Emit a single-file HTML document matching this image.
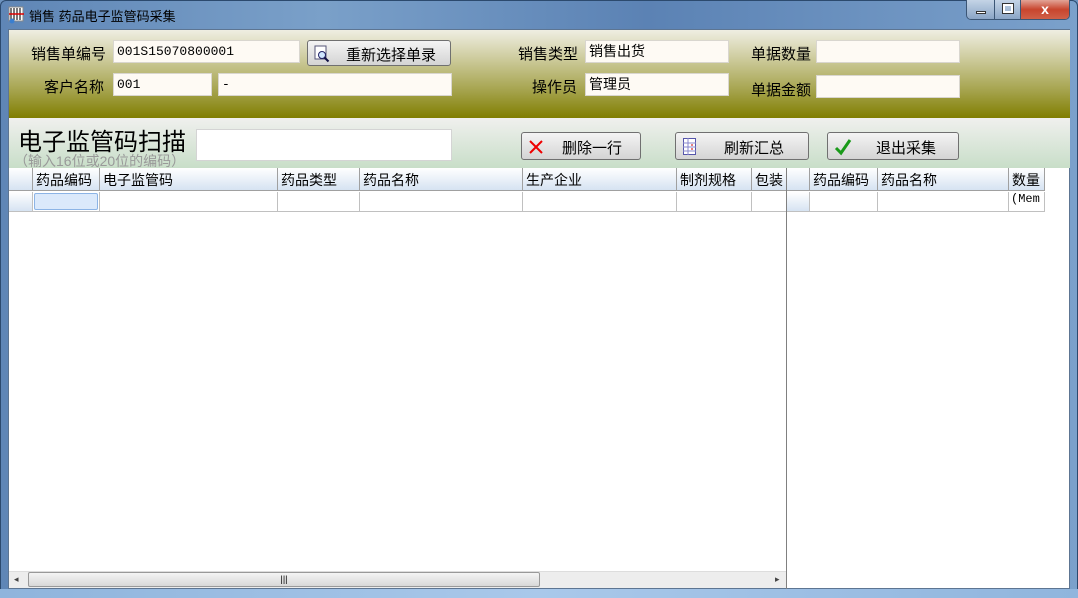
<!DOCTYPE html>
<html><head><meta charset="utf-8"><style>
*{margin:0;padding:0;box-sizing:border-box}
body{width:1078px;height:598px;overflow:hidden;position:relative;font-family:"Liberation Sans","Noto Sans CJK SC","WenQuanYi Zen Hei",sans-serif;font-size:14px;color:#000;background:#6d93bf}
.abs{position:absolute}
#frame{left:0;top:0;width:1078px;height:598px;background:linear-gradient(90deg,#5f86b6,#7aa0c9 30%,#5b82b4 60%,#7ba1cb);border:1px solid #2c4a6e;border-radius:6px 6px 0 0}
#bottom{left:0;top:589px;width:1078px;height:9px;background:linear-gradient(90deg,#8fb4dc,#a9c8ea 50%,#90b5dd)}
#title{left:29px;top:6px;font-size:13px;color:#000}
#client{left:8px;top:29px;width:1062px;height:560px;background:#fff;border:1px solid #5d7592}
#top{left:9px;top:30px;width:1061px;height:88px;background:linear-gradient(180deg,#efeee2 0%,#d0cea2 30%,#a4a24a 70%,#807e00 100%)}
#scan{left:9px;top:118px;width:1061px;height:50px;background:linear-gradient(180deg,#f0f0ee,#c8dec8)}
.lbl{position:absolute;font-size:15px;text-align:right}
.inp{position:absolute;background:#fefaf4;border:1px solid #d9d6cf;height:23px;font-size:13px;padding:3px 3px;font-family:"Liberation Mono","Noto Sans CJK SC",monospace}
.btn{position:absolute;border:1px solid #707070;border-radius:3px;background:linear-gradient(180deg,#f4f4f4,#e4e4e4 50%,#d4d4d4);font-size:14px;height:28px}
.btn span{position:absolute;top:5px}
.hdr{position:absolute;top:168px;height:23px;background:linear-gradient(180deg,#fff,#d6e3f2);border-bottom:1px solid #a0a0a0;border-right:1px solid #a0a0a0;font-size:14px;padding:2px 3px;white-space:nowrap;overflow:hidden}
.cell{position:absolute;top:192px;height:20px;border-bottom:1px solid #c0c0c0;border-right:1px solid #c0c0c0}
</style></head><body>
<div id="frame" class="abs"></div>
<svg class="abs" style="left:8px;top:6px" width="18" height="18"><rect x="1" y="1" width="14" height="14" fill="#fff" stroke="#888"/><path d="M3 2v12M6 2v12M9 2v12M12 2v12" stroke="#333" stroke-width="1.3"/><path d="M1 8h15" stroke="#d00" stroke-width="1.5"/><circle cx="4" cy="15" r="2.5" fill="#3a7fd0"/></svg>
<div id="title" class="abs">销售 药品电子监管码采集</div>
<div class="abs" style="left:966px;top:0;width:104px;height:20px;border:1px solid #3b5675;border-top:none;border-radius:0 0 5px 5px;overflow:hidden;display:flex">
 <div style="width:28px;background:linear-gradient(#c4d4e6,#8aa5c6);border-right:1px solid #3b5675;position:relative"><div class="abs" style="left:9px;top:11px;width:10px;height:3px;background:#fff;border:1px solid #333"></div></div>
 <div style="width:26px;background:linear-gradient(#c4d4e6,#8aa5c6);border-right:1px solid #3b5675;position:relative"><div class="abs" style="left:8px;top:4px;width:10px;height:9px;border:2px solid #fff;outline:1px solid #333"></div></div>
 <div style="flex:1;background:linear-gradient(#e2a496,#c8452e 50%,#d06048);color:#fff;font-weight:bold;text-align:center;font-size:14px;line-height:18px">x</div>
</div>
<div id="client" class="abs"></div>
<div id="top" class="abs"></div>
<div id="scan" class="abs"></div>
<div id="bottom" class="abs"></div>

<div class="lbl" style="left:31px;top:43px">销售单编号</div>
<div class="inp" style="left:113px;top:40px;width:187px">001S15070800001</div>
<div class="btn" style="left:307px;top:40px;width:144px;height:26px"><svg class="abs" style="left:6px;top:4px" width="18" height="18"><rect x="1" y="1" width="11" height="13" fill="#fff" stroke="#557"/><circle cx="8" cy="10" r="3.5" fill="#cfe6ff" stroke="#226"/><path d="M10.5 12.5l4 4" stroke="#114" stroke-width="2"/></svg><span style="left:38px;top:3px;font-size:15px">重新选择单录</span></div>
<div class="lbl" style="left:44px;top:76px">客户名称</div>
<div class="inp" style="left:113px;top:73px;width:99px">001</div>
<div class="inp" style="left:218px;top:73px;width:234px">-</div>
<div class="lbl" style="left:518px;top:43px">销售类型</div>
<div class="inp" style="left:585px;top:40px;width:144px;font-family:'Noto Sans CJK SC',sans-serif;padding-top:0;font-size:14px">销售出货</div>
<div class="lbl" style="left:532px;top:76px">操作员</div>
<div class="inp" style="left:585px;top:73px;width:144px;font-family:'Noto Sans CJK SC',sans-serif;padding-top:0;font-size:14px">管理员</div>
<div class="lbl" style="left:751px;top:43px">单据数量</div>
<div class="inp" style="left:816px;top:40px;width:144px"></div>
<div class="lbl" style="left:751px;top:79px">单据金额</div>
<div class="inp" style="left:816px;top:75px;width:144px"></div>

<div class="abs" style="left:18px;top:128px;font-size:24px;line-height:30px">电子监管码扫描</div>
<div class="abs" style="left:14px;top:151px;font-size:14px;color:#999">（输入16位或20位的编码）</div>
<div class="abs" style="left:196px;top:129px;width:256px;height:32px;background:#fff;border:1px solid #d4d4d4"></div>
<div class="btn" style="left:521px;top:132px;width:120px"><svg class="abs" style="left:7px;top:7px" width="14" height="14"><path d="M1 1l12 12M13 1L1 13" stroke="#e00" stroke-width="2"/></svg><span style="left:40px;font-size:15px;top:4px">删除一行</span></div>
<div class="btn" style="left:675px;top:132px;width:134px"><svg class="abs" style="left:7px;top:5px" width="14" height="18"><rect x="0.5" y="0.5" width="12" height="16" fill="#fff" stroke="#55a"/><path d="M0 5h13M0 9h13M0 13h13M5 0v17" stroke="#88c"/><path d="M8 7h2M8 11h2" stroke="#c00"/></svg><span style="left:48px;font-size:15px;top:4px">刷新汇总</span></div>
<div class="btn" style="left:827px;top:132px;width:132px"><svg class="abs" style="left:6px;top:5px" width="18" height="18"><path d="M2 10l5 5L16 2" stroke="#1a9a1a" stroke-width="3" fill="none"/></svg><span style="left:48px;font-size:15px;top:4px">退出采集</span></div>

<div class="hdr" style="left:9px;width:24px"></div>
<div class="hdr" style="left:33px;width:67px">药品编码</div>
<div class="hdr" style="left:100px;width:178px">电子监管码</div>
<div class="hdr" style="left:278px;width:82px">药品类型</div>
<div class="hdr" style="left:360px;width:163px">药品名称</div>
<div class="hdr" style="left:523px;width:154px">生产企业</div>
<div class="hdr" style="left:677px;width:75px">制剂规格</div>
<div class="hdr" style="left:752px;width:35px">包装</div>
<div class="cell" style="left:9px;width:24px;background:linear-gradient(#fff,#d6e3f2)"></div>
<div class="cell" style="left:33px;width:67px"><div class="abs" style="left:1px;top:1px;width:64px;height:17px;background:#dbe9fb;border:1px solid #8cb4e6;border-radius:2px"></div></div>
<div class="cell" style="left:100px;width:178px"></div>
<div class="cell" style="left:278px;width:82px"></div>
<div class="cell" style="left:360px;width:163px"></div>
<div class="cell" style="left:523px;width:154px"></div>
<div class="cell" style="left:677px;width:75px"></div>
<div class="cell" style="left:752px;width:35px"></div>
<div class="abs" style="left:786px;top:168px;width:1px;height:421px;background:#808080"></div>
<div class="abs" style="left:9px;top:571px;width:777px;height:17px;background:#ededed;border-top:1px solid #ddd"></div>
<div class="abs" style="left:28px;top:572px;width:512px;height:15px;background:linear-gradient(#f4f4f4,#d8d8d8);border:1px solid #999;border-radius:2px;font-size:9px;text-align:center;line-height:13px">|||</div>
<div class="abs" style="left:14px;top:574px;font-size:9px;color:#444">◂</div>
<div class="abs" style="left:775px;top:574px;font-size:9px;color:#444">▸</div>

<div class="hdr" style="left:787px;width:23px"></div>
<div class="hdr" style="left:810px;width:68px">药品编码</div>
<div class="hdr" style="left:878px;width:131px">药品名称</div>
<div class="hdr" style="left:1009px;width:36px">数量</div>
<div class="cell" style="left:787px;width:23px;background:linear-gradient(#fff,#d6e3f2)"></div>
<div class="cell" style="left:810px;width:68px"></div>
<div class="cell" style="left:878px;width:131px"></div>
<div class="cell" style="left:1009px;width:36px;font-size:12px;font-family:'Liberation Mono',monospace;overflow:hidden;white-space:nowrap;padding-left:2px">(Mem</div>
</body></html>
